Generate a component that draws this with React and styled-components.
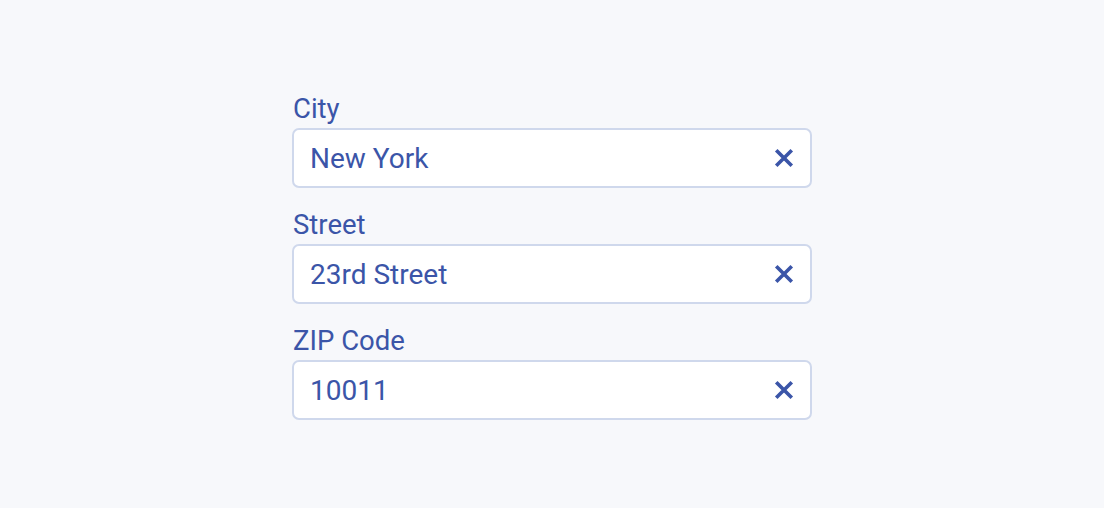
import React from 'react';
import styled, { createGlobalStyle } from 'styled-components';

const GlobalStyle = createGlobalStyle`
    html, body {
        margin: 0;
        padding: 0;
        background: #f7f8fb;
    }
    body {
        font-family: Roboto, "Liberation Sans", sans-serif;
    }
`;

const Page = styled.div`
    min-height: 100vh;
    box-sizing: border-box;
    padding-top: 4px;
    display: flex;
    align-items: center;
    justify-content: center;
`;

const Form = styled.form`
    width: 520px;
    display: flex;
    flex-direction: column;
    gap: 21px;
`;

const Field = styled.div`
    display: flex;
    flex-direction: column;
    gap: 5px;
`;

const Label = styled.label`
    font-size: 27.5px;
    line-height: 29px;
    padding: 1px 0 0 1px;
    color: #3b55a8;
`;

const InputBox = styled.div`
    height: 60px;
    box-sizing: border-box;
    border: 2px solid #cfd8ec;
    border-radius: 7px;
    background: #ffffff;
    display: flex;
    align-items: center;
    padding: 0 16px 0 16px;
`;

const Input = styled.input`
    flex: 1;
    min-width: 0;
    border: none;
    outline: none;
    background: transparent;
    padding: 2px 0 0 0;
    font-family: Roboto, "Liberation Sans", sans-serif;
    font-size: 28px;
    color: #3b55a8;
`;

const ClearButton = styled.button`
    border: none;
    background: transparent;
    padding: 0;
    width: 20px;
    height: 20px;
    display: flex;
    cursor: pointer;
    color: #3b55a8;
`;

const ClearIcon = () => (
    <svg width="20" height="20" viewBox="0 0 20 20" fill="none">
        <path d="M3.5 3.5 L16.5 16.5 M16.5 3.5 L3.5 16.5"
            stroke="currentColor" strokeWidth="3.6" strokeLinecap="square"/>
    </svg>
);

const fields = [
    { id: 'city', label: 'City', value: 'New York' },
    { id: 'street', label: 'Street', value: '23rd Street' },
    { id: 'zip', label: 'ZIP Code', value: '10011' },
];

const TextField = ({ id, label, value }) => (
    <Field>
        <Label htmlFor={id}>{label}</Label>
        <InputBox>
            <Input id={id} defaultValue={value}/>
            <ClearButton type="button" aria-label="Clear">
                <ClearIcon/>
            </ClearButton>
        </InputBox>
    </Field>
);

export default function App() {
    return (
        <Page>
            <GlobalStyle/>
            <Form onSubmit={ev => ev.preventDefault()}>
                {fields.map(f => <TextField key={f.id} {...f}/>)}
            </Form>
        </Page>
    );
}
